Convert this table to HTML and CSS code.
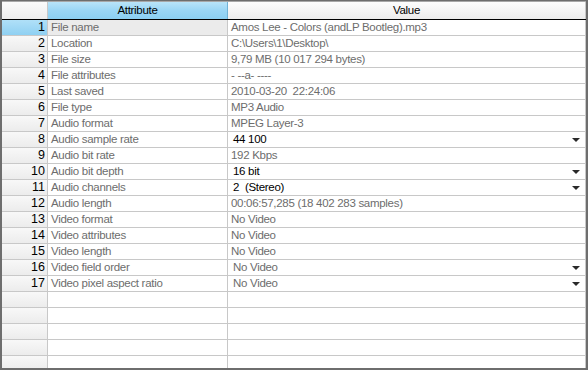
FILE: index.html
```html
<!DOCTYPE html>
<html>
<head>
<meta charset="utf-8">
<link rel="stylesheet" href="styles.css">
</head>
<body>
<div class="grid">
  <div class="row hdr">
    <div class="num corner"></div>
    <div class="attr hc hsel">Attribute</div>
    <div class="val hc">Value</div>
  </div>
  <div class="row first">
    <div class="num nsel">1</div>
    <div class="attr asel">File name</div>
    <div class="val">Amos Lee - Colors (andLP Bootleg).mp3</div>
  </div>
  <div class="row"><div class="num">2</div><div class="attr">Location</div><div class="val">C:\Users\1\Desktop\</div></div>
  <div class="row"><div class="num">3</div><div class="attr">File size</div><div class="val">9,79 MB (10 017 294 bytes)</div></div>
  <div class="row"><div class="num">4</div><div class="attr">File attributes</div><div class="val">- --a- ----</div></div>
  <div class="row"><div class="num">5</div><div class="attr">Last saved</div><div class="val">2010-03-20&nbsp; 22:24:06</div></div>
  <div class="row"><div class="num">6</div><div class="attr">File type</div><div class="val">MP3 Audio</div></div>
  <div class="row"><div class="num">7</div><div class="attr">Audio format</div><div class="val">MPEG Layer-3</div></div>
  <div class="row"><div class="num">8</div><div class="attr">Audio sample rate</div><div class="val combo"><span>44 100</span><i class="arrow"></i></div></div>
  <div class="row"><div class="num">9</div><div class="attr">Audio bit rate</div><div class="val">192 Kbps</div></div>
  <div class="row"><div class="num">10</div><div class="attr">Audio bit depth</div><div class="val combo"><span>16 bit</span><i class="arrow"></i></div></div>
  <div class="row"><div class="num">11</div><div class="attr">Audio channels</div><div class="val combo"><span>2&nbsp; (Stereo)</span><i class="arrow"></i></div></div>
  <div class="row"><div class="num">12</div><div class="attr">Audio length</div><div class="val">00:06:57,285 (18 402 283 samples)</div></div>
  <div class="row"><div class="num">13</div><div class="attr">Video format</div><div class="val">No Video</div></div>
  <div class="row"><div class="num">14</div><div class="attr">Video attributes</div><div class="val">No Video</div></div>
  <div class="row"><div class="num">15</div><div class="attr">Video length</div><div class="val">No Video</div></div>
  <div class="row"><div class="num">16</div><div class="attr">Video field order</div><div class="val combo gray"><span>No Video</span><i class="arrow"></i></div></div>
  <div class="row"><div class="num">17</div><div class="attr">Video pixel aspect ratio</div><div class="val combo gray"><span>No Video</span><i class="arrow"></i></div></div>
  <div class="row"><div class="num"></div><div class="attr"></div><div class="val"></div></div>
  <div class="row"><div class="num"></div><div class="attr"></div><div class="val"></div></div>
  <div class="row"><div class="num"></div><div class="attr"></div><div class="val"></div></div>
  <div class="row"><div class="num"></div><div class="attr"></div><div class="val"></div></div>
  <div class="row"><div class="num"></div><div class="attr"></div><div class="val"></div></div>
</div>
</body>
</html>
```
FILE: styles.css
```css
html, body {
  margin: 0;
  padding: 0;
  background: #ffffff;
}
.grid {
  box-sizing: border-box;
  width: 588px;
  height: 370px;
  border: 2px solid #6e6e6e;
  border-top: 1px solid #6e6e6e;
  overflow: hidden;
  background: #ffffff;
  font-family: "Liberation Sans", Arial, sans-serif;
  font-size: 11.5px;
  letter-spacing: -0.3px;
  color: #6d6d6d;
}
.row {
  display: flex;
  height: 16px;
  box-sizing: border-box;
  border-bottom: 1px solid #c8c8c8;
  line-height: 15px;
}
.row > div {
  box-sizing: border-box;
  height: 15px;
  white-space: nowrap;
  overflow: hidden;
}
.num {
  width: 46px;
  border-right: 1px solid #c8c8c8;
  background: linear-gradient(#f8f8f8, #ececec);
  color: #000;
  text-align: right;
  padding-right: 2px;
  font-size: 12.5px;
  letter-spacing: 0;
}
.attr {
  width: 180px;
  border-right: 1px solid #c8c8c8;
  padding-left: 3px;
}
.val {
  width: 358px;
  border-right: 1px solid #c8c8c8;
  padding-left: 3px;
}
.hdr {
  height: 19px;
  border-top: 1px solid #a8a8a8;
  border-bottom: 1px solid #000;
  line-height: 17px;
}
.hdr > div {
  height: 17px;
}
.corner {
  background: linear-gradient(#fbfbfb, #ededed);
}
.hc {
  text-align: center;
  color: #000;
  padding-left: 0;
  background: linear-gradient(#fdfdfd, #f3f3f3 60%, #ececec);
}
.hsel {
  background: linear-gradient(#b9e4f9, #9ad6f5 50%, #8bcff2);
  border-right-color: #6fb2d6;
}
.nsel {
  background: linear-gradient(#b0e0f8, #8fd0f2);
}
.asel {
  background: #ebebeb;
}
.combo {
  display: flex;
  align-items: center;
  justify-content: space-between;
  color: #000;
  padding-left: 5px;
  padding-right: 5px;
}
.combo.gray {
  color: #6d6d6d;
}
.arrow {
  width: 0;
  height: 0;
  border-left: 4px solid transparent;
  border-right: 4px solid transparent;
  border-top: 4px solid #2a2a2a;
}
```
